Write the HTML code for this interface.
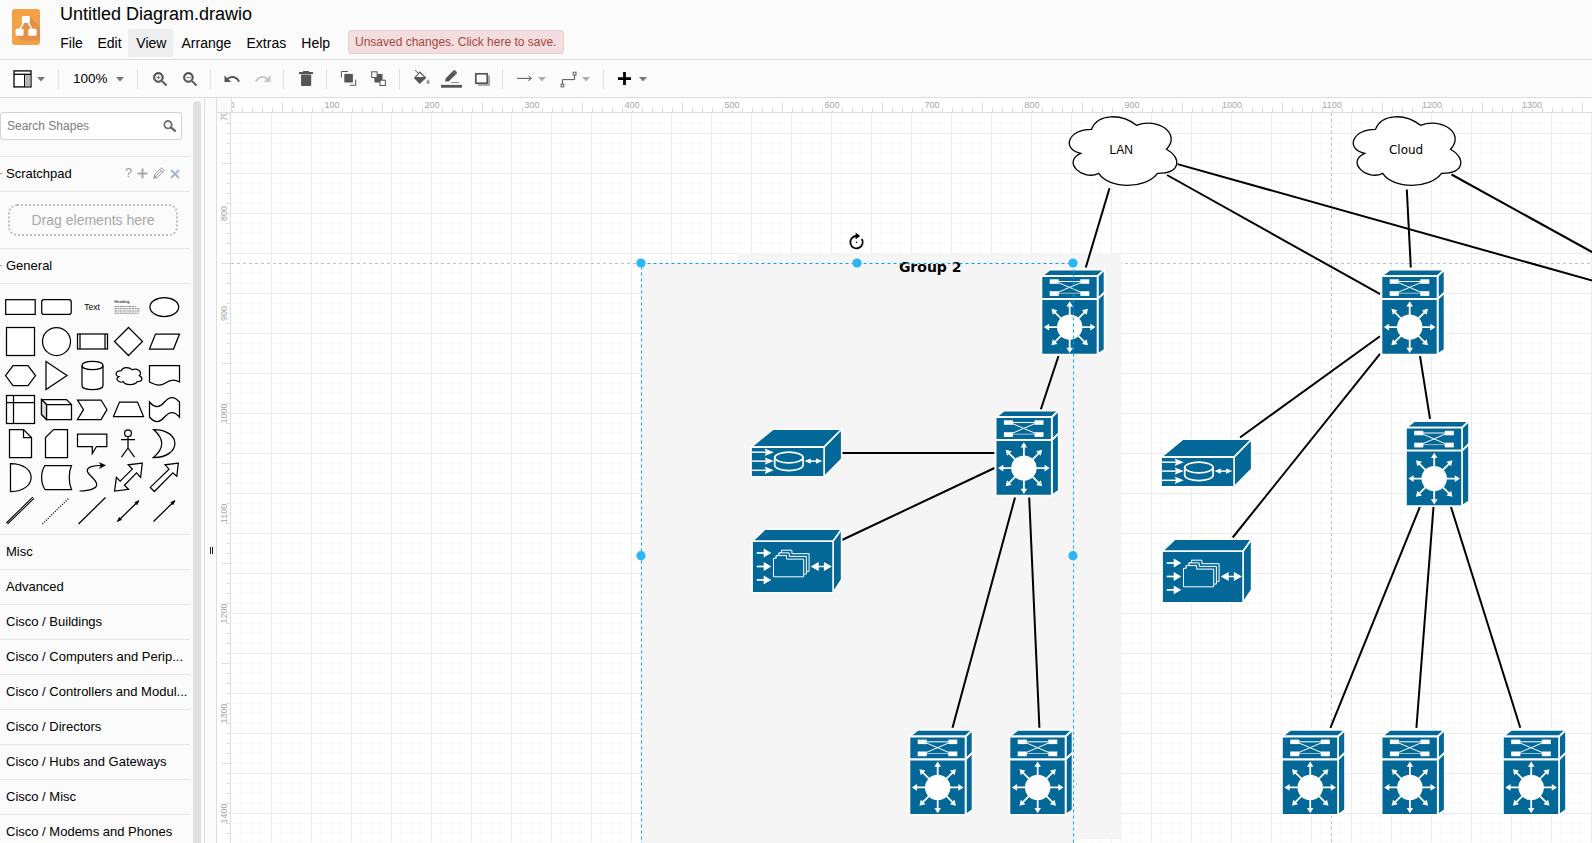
<!DOCTYPE html><html><head><meta charset="utf-8"><title>Untitled Diagram.drawio</title><style>
*{box-sizing:border-box}
html,body{margin:0;padding:0}
body{width:1592px;height:843px;overflow:hidden;background:#fbfbfb;font-family:"Liberation Sans",Helvetica,Arial,sans-serif;color:#000;position:relative}
.abs{position:absolute}
#menubar{position:absolute;left:0;top:0;width:1592px;height:60px;background:#fbfbfb;border-bottom:1px solid #dadce0}
#logo{position:absolute;left:12px;top:9px;width:28px;height:36px}
#title{position:absolute;left:60px;top:3px;font-size:18px;line-height:22px;white-space:nowrap;color:#000}
.mi{position:absolute;top:29px;height:28px;line-height:28px;font-size:14px;color:#000;white-space:nowrap;border-radius:2px}
#status{position:absolute;left:348px;top:30px;height:24px;width:216px;background:#f2dede;border:1px solid #ebccd1;border-radius:3px;color:#a94442;font-size:12px;line-height:22px;padding-left:6px;white-space:nowrap}
#toolbar{position:absolute;left:0;top:60px;width:1592px;height:38px;background:#fbfbfb;border-bottom:1px solid #dadce0}
.sep{position:absolute;top:9px;width:1px;height:20px;background:#e0e0e0}
#zoomtxt{position:absolute;left:73px;top:10px;font-size:13.5px;line-height:18px;color:#000}
#sidebar{position:absolute;left:0;top:98px;width:205px;height:745px;background:#fbfbfb;border-right:1px solid #e0e0e0;overflow:hidden}
#search{position:absolute;left:0;top:14px;width:182px;height:28px;border:1px solid #d2d2d2;border-radius:3px;background:#fff;font-size:12px;line-height:27px;color:#7d7d7d;padding-left:6px}
.hr{position:absolute;left:0;width:190px;height:1px;background:#e5e5e5}
.st{position:absolute;left:6px;margin-top:0.7px;font-size:13px;line-height:16px;color:#000;white-space:nowrap}
#drag{position:absolute;left:8px;top:106px;width:170px;height:32px;border:2px dotted #bdbdbd;border-radius:9px;font-size:14px;line-height:28px;text-align:center;color:#a8a8a8}
#sbthumb{position:absolute;left:193px;top:3px;width:8px;height:760px;border-radius:4px;background:#e0e0e0}
#hsplit{position:absolute;left:205px;top:98px;width:11px;height:745px;background:#fbfbfb}
</style></head><body><div id="menubar"><svg id="logo" viewBox="0 0 28 36"><rect x="0" y="0" width="28" height="36" rx="3" fill="#f2a244"/>
<path d="M17.800 7.400 L28 17.800 V31.600 H9.800 L3.800 26 L8 20 L11.600 14 Z" fill="#e4904a"/>
<path d="M11.500 14 L7.600 20.600 M16.300 14 L20.300 20.600" stroke="#fff" stroke-width="1.500" fill="none"/>
<rect x="9.800" y="7.100" width="8.100" height="6.900" rx="1.200" fill="#fff"/>
<rect x="3.600" y="19.800" width="8" height="7" rx="1.200" fill="#fff"/>
<rect x="16.300" y="19.800" width="8.200" height="7" rx="1.200" fill="#fff"/>
</svg><div id="title">Untitled Diagram.drawio</div><div class="mi" style="left:60.3px">File</div><div class="mi" style="left:97.5px">Edit</div><div class="mi" style="left:128px;width:45px;background:#eeeeee;padding-left:8.3px">View</div><div class="mi" style="left:181.5px">Arrange</div><div class="mi" style="left:246.5px">Extras</div><div class="mi" style="left:301.3px">Help</div><div id="status">Unsaved changes. Click here to save.</div></div><div id="toolbar"><svg class="abs" style="left:13px;top:10px" width="19" height="18" viewBox="0 0 19 18"><rect x="1" y="0.9" width="17" height="16" fill="#fff" stroke="#000" stroke-width="1.3"/><path d="M1 4.3H18" stroke="#000" stroke-width="1.3"/><path d="M11.6 4.3V17" stroke="#000" stroke-width="1.1"/><rect x="12.2" y="5" width="5.2" height="11.3" fill="#b4b4b4"/></svg><svg class="abs" style="left:37px;top:17px" width="8" height="5" viewBox="0 0 8 5"><path d="M0 0H8L4 4.6Z" fill="#777"/></svg><div class="sep" style="left:58px"></div><div class="sep" style="left:137px"></div><div class="sep" style="left:210px"></div><div class="sep" style="left:283px"></div><div class="sep" style="left:326px"></div><div class="sep" style="left:399px"></div><div class="sep" style="left:502px"></div><div class="sep" style="left:603px"></div><div id="zoomtxt">100%</div><svg class="abs" style="left:116px;top:17px" width="8" height="5" viewBox="0 0 8 5"><path d="M0 0H8L4 4.6Z" fill="#777"/></svg><svg class="abs" style="left:150.600px;top:9.800px" width="18.700" height="18.700" viewBox="0 0 24 24"><path d="M15.5 14h-.79l-.28-.27C15.41 12.59 16 11.11 16 9.5 16 5.91 13.09 3 9.5 3S3 5.910 3 9.500 5.910 16 9.500 16c1.610 0 3.090-.590 4.230-1.570l.270.280v.790l5 4.990L20.490 19l-4.990-5zm-6 0C7.010 14 5 11.990 5 9.500S7.010 5 9.500 5 14 7.010 14 9.500 11.990 14 9.500 14z" fill="#555" stroke="#555" stroke-width="0.700"/><path d="M12 10h-2v2H9v-2H7V9h2V7h1v2h2v1z" fill="#555"/></svg><svg class="abs" style="left:180.700px;top:9.800px" width="18.700" height="18.700" viewBox="0 0 24 24"><path d="M15.5 14h-.79l-.28-.27C15.41 12.59 16 11.11 16 9.5 16 5.91 13.09 3 9.5 3S3 5.910 3 9.500 5.910 16 9.500 16c1.610 0 3.090-.590 4.230-1.570l.270.280v.790l5 4.990L20.490 19l-4.990-5zm-6 0C7.010 14 5 11.990 5 9.500S7.010 5 9.500 5 14 7.010 14 9.500 11.990 14 9.500 14z" fill="#555" stroke="#555" stroke-width="0.700"/><path d="M7 9h5v1H7z" fill="#555"/></svg><svg class="abs" style="left:223.200px;top:9.900px" width="18" height="18" viewBox="0 0 24 24"><path d="M12.500 8c-2.650 0-5.050.990-6.900 2.600L2 7v9h9l-3.620-3.620c1.390-1.160 3.160-1.880 5.120-1.880 3.540 0 6.550 2.310 7.600 5.500l2.370-.780C21.080 11.030 17.150 8 12.500 8z" fill="#555"/></svg><svg class="abs" style="left:253.600px;top:9.900px" width="18" height="18" viewBox="0 0 24 24"><path d="M18.400 10.600C16.550 8.990 14.150 8 11.500 8c-4.650 0-8.580 3.030-9.960 7.220L3.900 16c1.050-3.190 4.050-5.500 7.600-5.500 1.950 0 3.730.720 5.120 1.880L13 16h9V7l-3.600 3.600z" fill="#c6c6c6"/></svg><svg class="abs" style="left:299px;top:10px" width="14" height="17" viewBox="0 0 14 17"><path d="M0 2.100H14V3.900H0ZM4 1H10V2.100H4Z" fill="#555"/><path d="M2.100 4.600H12.200V15Q12.200 15.900 11.300 15.900H3Q2.100 15.900 2.100 15Z" fill="#555"/></svg><svg class="abs" style="left:340px;top:10px" width="17" height="17" viewBox="0 0 17 17"><path d="M1.400 7.500V1.500H7.900M9.700 15.300H15.700V9.700" fill="none" stroke="#555" stroke-width="1"/><rect x="4.300" y="3.900" width="8.600" height="8.600" fill="#555"/></svg><svg class="abs" style="left:370px;top:10px" width="17" height="17" viewBox="0 0 17 17"><rect x="4.400" y="3.900" width="8.100" height="8.600" fill="#555"/><rect x="1.700" y="1.800" width="5.400" height="5.700" fill="#fbfbfb" stroke="#555" stroke-width="1"/><rect x="10" y="10.200" width="5.400" height="5.300" fill="#fbfbfb" stroke="#555" stroke-width="1"/></svg><svg class="abs" style="left:413px;top:9px" width="18" height="17" viewBox="0 0 18 17"><path d="M2 1.100L6.200 5.300" stroke="#555" stroke-width="1"/><path d="M6.700 2.300L13.400 8.700L6.700 15.100L0.900 9.100Z" fill="#555"/><path d="M6.700 4.100L10.900 8.100H3Z" fill="#fbfbfb"/><path d="M15.100 10.300C16.200 11.900 16.800 12.600 16.800 13.300A1.700 1.700 0 0 1 13.400 13.300C13.400 12.600 14 11.900 15.100 10.300Z" fill="#999"/></svg><svg class="abs" style="left:441px;top:9px" width="22" height="20" viewBox="0 0 22 20"><path d="M4.200 12.400L4.600 9.400L12.400 1.400Q13.200 0.700 14.200 1.500L15.600 2.900Q16.400 3.900 15.600 4.700L7.600 12.600Z" fill="#555"/><path d="M12.600 2.600L14.600 4.600" stroke="#999" stroke-width="0.700"/><path d="M10 13.500H18" stroke="#888" stroke-width="0.900"/><rect x="0" y="15.900" width="20.900" height="2.800" fill="#555"/></svg><svg class="abs" style="left:474px;top:12px" width="17" height="14" viewBox="0 0 17 14"><rect x="3.600" y="3.400" width="12.400" height="10.500" fill="#aaa"/><rect x="1.800" y="1.800" width="11.400" height="9.400" fill="#fbfbfb" stroke="#555" stroke-width="1.700"/></svg><svg class="abs" style="left:516px;top:13px" width="17" height="11" viewBox="0 0 17 11"><path d="M1 5.400H15.200M12.400 3L15.400 5.400L12.400 7.800" fill="none" stroke="#555" stroke-width="1"/></svg><svg class="abs" style="left:538px;top:17px" width="8" height="5" viewBox="0 0 8 5"><path d="M0 0H8L4 4.6Z" fill="#b0b0b0"/></svg><svg class="abs" style="left:560px;top:11px" width="17" height="17" viewBox="0 0 17 17"><path d="M2.400 13.200V8.600H14.600V4" fill="none" stroke="#555" stroke-width="1"/><rect x="1.100" y="13.200" width="2.700" height="2.700" fill="#fbfbfb" stroke="#555" stroke-width="0.900"/><rect x="13.200" y="1.200" width="2.800" height="2.800" fill="#fbfbfb" stroke="#555" stroke-width="0.900"/></svg><svg class="abs" style="left:582px;top:17px" width="8" height="5" viewBox="0 0 8 5"><path d="M0 0H8L4 4.6Z" fill="#b0b0b0"/></svg><svg class="abs" style="left:618px;top:12px" width="13" height="13" viewBox="0 0 13 13"><path d="M0 6.6H13M6.5 0V13" stroke="#000" stroke-width="2.8"/></svg><svg class="abs" style="left:639px;top:17px" width="8" height="5" viewBox="0 0 8 5"><path d="M0 0H8L4 4.6Z" fill="#777"/></svg></div><div id="sidebar"><div id="search">Search Shapes</div><svg class="abs" style="left:163px;top:22px" width="14" height="12" viewBox="0 0 14 12"><circle cx="5" cy="4.700" r="3.700" fill="none" stroke="#707070" stroke-width="1.800"/><path d="M7.900 7.500L12 10.800" stroke="#707070" stroke-width="2.400" stroke-linecap="round"/></svg><div class="hr" style="top:58px"></div><div class="hr" style="top:93px"></div><div class="hr" style="top:150px"></div><div class="hr" style="top:185px"></div><div class="hr" style="top:436px"></div><div class="hr" style="top:471px"></div><div class="hr" style="top:506px"></div><div class="hr" style="top:541px"></div><div class="hr" style="top:576px"></div><div class="hr" style="top:611px"></div><div class="hr" style="top:646px"></div><div class="hr" style="top:681px"></div><div class="hr" style="top:716px"></div><div class="st" style="top:67px">Scratchpad</div><div class="abs" style="left:0;top:75px;width:2px;height:1px;background:#999"></div><div class="abs" style="left:0;top:167px;width:2px;height:1px;background:#999"></div><div class="abs" style="left:125.100px;top:67.200px;font-size:13px;line-height:16px;color:#999">?</div><svg class="abs" style="left:136.500px;top:69.700px" width="11" height="11" viewBox="0 0 11 11"><path d="M0.500 5.500H10.500M5.500 0.500V10.500" stroke="#a6a6a6" stroke-width="1.900"/></svg><svg class="abs" style="left:153px;top:69px" width="12" height="12" viewBox="0 0 12 12"><path d="M0.800 11.200L1.600 7.600L7.800 1.400Q8.600 0.600 9.400 1.400L10.600 2.600Q11.400 3.400 10.600 4.200L4.400 10.400Z" fill="none" stroke="#999" stroke-width="1"/><path d="M3 9L8.800 3.200M6.800 2.400L9.600 5.200" stroke="#999" stroke-width="0.800"/><path d="M0.800 11.200L1.600 7.800L4.200 10.400Z" fill="#999"/></svg><svg class="abs" style="left:169.700px;top:70.500px" width="10" height="10" viewBox="0 0 10 10"><path d="M1 1L9 9M9 1L1 9" stroke="#a6b9d1" stroke-width="2.100"/></svg><div id="drag">Drag elements here</div><div class="st" style="top:159px">General</div><svg class="abs" style="left:0;top:192px" width="190" height="240" viewBox="0 290 190 240"><g fill="#fff" stroke="#000" stroke-width="1.250" stroke-linejoin="miter"><rect x="5.700" y="299.700" width="29.500" height="14.700"/><rect x="41.700" y="299.700" width="29.500" height="14.700" rx="2.200"/><ellipse cx="164.300" cy="307.100" rx="14.400" ry="9.500"/><rect x="6.5" y="327.5" width="28" height="28"/><circle cx="56.5" cy="341.5" r="14"/><rect x="77.5" y="334" width="30" height="15"/><path d="M80 334V349M105 334V349" fill="none"/><path d="M128.5 327.5L142.5 341.5L128.5 355.5L114.5 341.5Z"/><path d="M149.5 349L155.5 334H179.5L173.5 349Z"/><path d="M5.5 375.5L13 365.5H28L35.5 375.5L28 385.5H13Z"/><path d="M46 361.5L67 375.5L46 389.5Z"/><path d="M82 365.5C82 360 103 360 103 365.5V385.5C103 391 82 391 82 385.5Z"/><path d="M82 365.5C82 371 103 371 103 365.5" fill="none"/><path d="M121.4 370.65 C115.64 370.65 114.2 375.6 118.808 376.59 C114.2 378.768 119.384 383.52 123.128 381.54 C125.72 385.5 134.36 385.5 137.24 381.54 C143 381.54 143 377.58 139.4 375.6 C143 371.64 137.24 367.68 132.2 369.66 C128.6 366.69 122.84 366.69 121.4 370.65 Z"/><path d="M149.5 365.5H179.5V382C172 377.5 167 382 164.5 383.5C160 386.5 154 384.5 149.5 382Z"/><rect x="6.5" y="395.5" width="28" height="28"/><path d="M13.5 395.5V423.5M6.5 402.5H34.5" fill="none"/><path d="M41.5 399.5H66.5L71.5 404.5V419.5H46.5L41.5 414.5Z"/><path d="M41.5 399.5L46.5 404.5H71.5M46.5 404.5V419.5" fill="none"/><path d="M41.5 399.5L46.5 404.5V419.5L41.5 414.5Z" fill="#ddd"/><path d="M77.5 400H101L107 409.7L101 419.5H77.5L83.5 409.7Z"/><path d="M113.5 416.5L119.5 402H137.5L143.5 416.5Z"/><path d="M149.500 402Q157 411 164.500 402Q172 393 179.500 402V417Q172 408 164.500 417Q157 426 149.500 417Z"/><path d="M9.5 429.5H23.5L31.5 437.5V457.5H9.5Z"/><path d="M23.5 429.5V437.5H31.5" fill="none"/><path d="M53.5 429.5H67.500V457.5H45.500V437.5Z"/><path d="M77.500 434H106.800V446.500H96.500L92.300 453.500V446.500H77.500Z"/><circle cx="128" cy="433.2" r="3.4"/><path d="M128 436.600V448M121 439.500H135M128 448L121.500 457.200M128 448L134.500 457.200" fill="none"/><path d="M153.500 429.500C182 429.500 182 457.500 153.500 457.500C164.500 448 164.500 439 153.500 429.500Z"/><path d="M10.500 463.500C38 463.500 38 491.500 10.500 491.500Z"/><path d="M45 465.500H71.500C68.500 472 68.500 483 71.500 489.500H45C40.500 483 40.500 472 45 465.500Z"/><path d="M79.500 491C90 490.500 97 488.500 96.700 484.500C96.500 479 87 474.500 87.200 470.500C87.500 466 95 465.500 102 465.400" fill="none"/><path d="M105.400 465.300L99.500 462.700L101.200 465.500L99.500 468.400Z" fill="#000" stroke-width="0.600"/><path d="M142.300 463.200L128.200 464.800L132.300 469.100L120.200 481.200L116.400 477.400L114.600 491L128.500 489.400L124.400 485.300L136.500 472.900L140.600 477.400Z"/><path d="M178.300 463.200L165.100 464.800L169 469.100L150.300 487.400L154.400 491.500L172.800 472.900L176.800 476.300Z"/><path d="M6.300 523L32.700 497.200M7.500 524.200L33.900 498.400" fill="none" stroke-width="1.050"/><path d="M42.500 524L69 498" fill="none" stroke-dasharray="1 1.500"/><path d="M78.500 524L105.500 497.500" fill="none"/><path d="M119.500 519.500L136.500 503" fill="none"/><path d="M117.300 521.600L119.300 517.400L120 518.900L121.500 519.600ZM139 500.500L137 504.700L136.300 503.200L134.800 502.500Z" fill="#000" stroke-width="0.800"/><path d="M153.500 521.500L172.500 503" fill="none"/><path d="M175 500.500L173 504.700L172.300 503.200L170.800 502.500Z" fill="#000" stroke-width="0.800"/></g><text x="92" y="310" font-size="8.500" text-anchor="middle" font-family="Liberation Sans, sans-serif" fill="#000">Text</text><text x="114.300" y="303.300" font-size="3.900" font-weight="bold" font-family="Liberation Sans, sans-serif" fill="#444">Heading</text><path d="M114.500 306.5 h21" stroke="#7a7a8a" stroke-width="0.900" stroke-dasharray="2.500 0.600 1.500 0.500 3 0.600"/><path d="M114.500 308.7 h25" stroke="#7a7a8a" stroke-width="0.900" stroke-dasharray="2.500 0.600 1.500 0.500 3 0.600"/><path d="M114.500 311 h25" stroke="#7a7a8a" stroke-width="0.900" stroke-dasharray="2.500 0.600 1.500 0.500 3 0.600"/><path d="M114.500 313.2 h24" stroke="#7a7a8a" stroke-width="0.900" stroke-dasharray="2.500 0.600 1.500 0.500 3 0.600"/></svg><div class="st" style="top:445px">Misc</div><div class="st" style="top:480px">Advanced</div><div class="st" style="top:515px">Cisco / Buildings</div><div class="st" style="top:550px">Cisco / Computers and Perip...</div><div class="st" style="top:585px">Cisco / Controllers and Modul...</div><div class="st" style="top:620px">Cisco / Directors</div><div class="st" style="top:655px">Cisco / Hubs and Gateways</div><div class="st" style="top:690px">Cisco / Misc</div><div class="st" style="top:725px">Cisco / Modems and Phones</div><div id="sbthumb"></div></div><div id="hsplit"><div class="abs" style="left:5px;top:449px;width:1px;height:7px;background:#222"></div><div class="abs" style="left:7px;top:449px;width:1px;height:7px;background:#222"></div></div><svg class="abs" style="left:216px;top:98px" width="1376" height="745" viewBox="216 98 1376 745" font-family="Liberation Sans, sans-serif"><defs><pattern id="grid" x="231" y="93" width="40" height="40" patternUnits="userSpaceOnUse"><path d="M10 0V40M20 0V40M30 0V40M0 10H40M0 20H40M0 30H40" stroke="#f8f8f8" stroke-width="1" fill="none"/><path d="M0.5 0V40M0 0.5H40" stroke="#ececec" stroke-width="1" fill="none"/></pattern><path id="swa" d="M11 -0.900H20.600V-3.300L25.800 0L20.600 3.300V0.900H11Z" fill="#fff"/><symbol id="sw" viewBox="0 0 64 86" overflow="visible"><g fill="#036897" stroke="#fff" stroke-width="1.800" stroke-linejoin="round"><path d="M0.400 7.200L8.800 0.500H63.600L56.600 7.200Z"/><path d="M56.600 7.200L63.600 0.500V23.300L56.600 30.200Z"/><path d="M56.600 30.200L63.600 23.300V80.800L56.600 85.600Z"/><rect x="0.400" y="7.200" width="56.200" height="23"/><rect x="0.400" y="30.200" width="56.200" height="55.400"/></g><g fill="#fff"><rect x="8.700" y="10.300" width="9.100" height="4.500"/><rect x="39.300" y="10.300" width="9" height="4.500"/><rect x="8.700" y="22.200" width="9.100" height="4.700"/><rect x="39.300" y="22.200" width="9" height="4.700"/></g><path d="M17.500 13.700L39.600 23.100M17.500 23.100L39.600 13.700M17.500 12.500H39.600" stroke="#fff" stroke-width="1" fill="none"/><path d="M17.500 24.200H39.600" stroke="#fff" stroke-width="0.700" opacity="0.850" fill="none"/><circle cx="28.700" cy="58.100" r="12.700" fill="#fff"/><use href="#swa" transform="translate(28.700 58.100) rotate(0)"/><use href="#swa" transform="translate(28.700 58.100) rotate(45)"/><use href="#swa" transform="translate(28.700 58.100) rotate(90)"/><use href="#swa" transform="translate(28.700 58.100) rotate(135)"/><use href="#swa" transform="translate(28.700 58.100) rotate(180)"/><use href="#swa" transform="translate(28.700 58.100) rotate(225)"/><use href="#swa" transform="translate(28.700 58.100) rotate(270)"/><use href="#swa" transform="translate(28.700 58.100) rotate(315)"/></symbol><symbol id="ce" viewBox="0 0 92 49" overflow="visible"><g fill="#036897" stroke="#fff" stroke-width="1.6" stroke-linejoin="round"><path d="M0.800 18.800L22.400 1H91.400L73.800 18.800Z"/><path d="M73.800 18.800L91.400 1V30.800L73.800 48.400Z"/><rect x="0.800" y="18.800" width="73" height="29.600"/></g><path d="M1.800 23.9 H17" stroke="#fff" stroke-width="1.500"/><path d="M23.500 23.9 L14.300 20.2 L16 23.9 L14.300 27.6 Z" fill="#fff"/><path d="M1.800 32.8 H17" stroke="#fff" stroke-width="1.500"/><path d="M23.500 32.8 L14.300 29.1 L16 32.8 L14.300 36.5 Z" fill="#fff"/><path d="M1.800 42 H17" stroke="#fff" stroke-width="1.500"/><path d="M23.500 42 L14.300 38.3 L16 42 L14.300 45.7 Z" fill="#fff"/><path d="M24.400 29.200V37A14.200 5.300 0 0 0 52.800 37V29.200" fill="none" stroke="#fff" stroke-width="1.700"/><ellipse cx="38.600" cy="29.200" rx="14.200" ry="5.300" fill="none" stroke="#fff" stroke-width="1.700"/><path d="M58 32.800H68" stroke="#fff" stroke-width="1.500"/><path d="M54.200 32.800L60.400 30.100V35.500ZM72 32.800L65.800 30.100V35.500Z" fill="#fff"/></symbol><symbol id="fe" viewBox="0 0 91 65" overflow="visible"><g fill="#036897" stroke="#fff" stroke-width="1.600" stroke-linejoin="round"><path d="M0.800 12.800L13.600 0.700H90.300L81.800 12.800Z"/><path d="M81.800 12.800L90.300 0.700V51.200L81.800 64.200Z"/><rect x="0.800" y="12.800" width="81" height="51.400"/></g><path d="M5.400 24.5 H14" stroke="#fff" stroke-width="1.700"/><path d="M20 24.5 L12.400 20.1 V28.9 Z" fill="#fff"/><path d="M5.400 38 H14" stroke="#fff" stroke-width="1.700"/><path d="M20 38 L12.400 33.6 V42.4 Z" fill="#fff"/><path d="M5.400 51.4 H14" stroke="#fff" stroke-width="1.700"/><path d="M20 51.4 L12.400 47 V55.8 Z" fill="#fff"/><path transform="translate(27.6 21.4)" d="M0 3H2.700V0.300H13V3.800H30.200V21.500H0Z" fill="#036897" stroke="#fff" stroke-width="1"/><path transform="translate(24.9 24.1)" d="M0 3H2.700V0.300H13V3.800H30.200V21.500H0Z" fill="#036897" stroke="#fff" stroke-width="1"/><path transform="translate(22.2 26.8)" d="M0 3H2.700V0.300H13V3.800H30.200V21.500H0Z" fill="#036897" stroke="#fff" stroke-width="1"/><path d="M64 38H76" stroke="#fff" stroke-width="1.500"/><path d="M59.400 38L67.400 33.600V42.400ZM80.600 38L72.600 33.600V42.400Z" fill="#fff"/></symbol></defs><rect x="231" y="113" width="1361" height="730" fill="#fff"/><rect x="232" y="113" width="1360" height="730" fill="url(#grid)"/><path d="M231 263.500H1592M1331.500 113V843" stroke="#c2c2c2" stroke-width="1" stroke-dasharray="3 3" fill="none"/><rect x="738" y="253" width="383.500" height="586" fill="#f5f5f5"/><rect x="641" y="263" width="432.500" height="600" fill="#f5f5f5"/><g stroke="#000" stroke-width="2" fill="none"><path d="M1109.5 188.2 L1085.8 267.5"/><path d="M1058.5 356 L1040.8 409.5"/><path d="M842 453 L994.5 453"/><path d="M842 540 L994.5 468"/><path d="M1015 497.5 L952.5 727.8"/><path d="M1029.2 497.5 L1039.4 727.8"/><path d="M1167 175 L1380.2 294.2"/><path d="M1177.5 164.1 L1600 282.7"/><path d="M1406.8 189.5 L1410.8 267.5"/><path d="M1451.5 174.5 L1600 256.4"/><path d="M1380 336.2 L1240 437.5"/><path d="M1380 353.8 L1232.7 537.5"/><path d="M1420 356.2 L1430 418.8"/><path d="M1419.8 507 L1330.4 727.8"/><path d="M1433.5 507 L1416.4 727.8"/><path d="M1451 507 L1520.3 727.8"/></g><use href="#sw" x="1041" y="269" width="64" height="86"/><use href="#sw" x="995.2" y="410" width="64" height="86"/><use href="#sw" x="909" y="729.3" width="64" height="86"/><use href="#sw" x="1009" y="729.3" width="64" height="86"/><use href="#sw" x="1381" y="269" width="64" height="86"/><use href="#sw" x="1405.5" y="420.5" width="64" height="86"/><use href="#sw" x="1281.5" y="729.3" width="64" height="86"/><use href="#sw" x="1381.2" y="729.3" width="64" height="86"/><use href="#sw" x="1502.5" y="729.3" width="64" height="86"/><use href="#ce" x="750.300" y="428.300" width="92" height="49"/><use href="#fe" x="751.300" y="528.500" width="91" height="65"/><use href="#ce" x="1160.300" y="438.300" width="92" height="49"/><use href="#fe" x="1161.300" y="538.500" width="91" height="65"/><path d="M1091.5 129.3 C1067.5 129.3 1061.5 149.3 1080.7 153.3 C1061.5 162.1 1083.1 181.3 1098.7 173.3 C1109.5 189.3 1145.5 189.3 1157.5 173.3 C1181.5 173.3 1181.5 157.3 1166.5 149.3 C1181.5 133.3 1157.5 117.3 1136.5 125.3 C1121.5 113.3 1097.5 113.3 1091.5 129.3 Z" fill="#fff" stroke="#000" stroke-width="1.300"/><text x="1121.2" y="153.900" font-size="12" text-anchor="middle" font-family="Liberation Sans, sans-serif" fill="#000">LAN</text><path d="M1375.5 129.3 C1351.5 129.3 1345.5 149.3 1364.7 153.3 C1345.5 162.1 1367.1 181.3 1382.7 173.3 C1393.5 189.3 1429.5 189.3 1441.5 173.3 C1465.5 173.3 1465.5 157.3 1450.5 149.3 C1465.5 133.3 1441.5 117.3 1420.5 125.3 C1405.5 113.3 1381.5 113.3 1375.5 129.3 Z" fill="#fff" stroke="#000" stroke-width="1.300"/><text x="1406.1" y="153.900" font-size="12" text-anchor="middle" font-family="DejaVu Sans, Verdana, sans-serif" fill="#000">Cloud</text><text x="930.200" y="271.700" font-size="14" font-weight="bold" text-anchor="middle" font-family="DejaVu Sans, Verdana, sans-serif" fill="#000">Group 2</text><rect x="641.500" y="263.500" width="432" height="600" fill="none" stroke="#00a8ff" stroke-width="1" stroke-dasharray="3 3"/><circle cx="641" cy="263" r="4.600" fill="#29b6f2"/><circle cx="857" cy="263" r="4.600" fill="#29b6f2"/><circle cx="1073" cy="263" r="4.600" fill="#29b6f2"/><circle cx="641" cy="555.7" r="4.600" fill="#29b6f2"/><circle cx="1073" cy="555.7" r="4.600" fill="#29b6f2"/><g transform="translate(856.600 242.200)"><circle cx="0" cy="0.300" r="8.300" fill="#fff" opacity="0.700"/><path d="M5.200 -3.300A6.200 6.200 0 1 1 -0.500 -6.200" fill="none" stroke="#000" stroke-width="1.800"/><path d="M-1 -9.600L3.600 -6.200L-1 -3Z" fill="#000"/><circle cx="0" cy="0" r="0.700" fill="#000"/></g><rect x="216" y="98" width="1376" height="15" fill="#fff"/><rect x="216" y="98" width="15" height="745" fill="#fff"/><rect x="217" y="98" width="14" height="14.500" fill="#fbfbfb"/><clipPath id="hc"><rect x="231.500" y="98" width="1361" height="15"/></clipPath><clipPath id="vc"><rect x="216" y="113" width="15" height="730"/></clipPath><path d="M232.5 110V112.500M242.5 107.500V112.500M252.5 107.500V112.500M262.5 107.500V112.500M272.5 107.500V112.500M282.5 102.500V112.500M292.5 107.500V112.500M302.5 107.500V112.500M312.5 107.500V112.500M322.5 107.500V112.500M332.5 110V112.500M342.5 107.500V112.500M352.5 107.500V112.500M362.5 107.500V112.500M372.5 107.500V112.500M382.5 102.500V112.500M392.5 107.500V112.500M402.5 107.500V112.500M412.5 107.500V112.500M422.5 107.500V112.500M432.5 110V112.500M442.5 107.500V112.500M452.5 107.500V112.500M462.5 107.500V112.500M472.5 107.500V112.500M482.5 102.500V112.500M492.5 107.500V112.500M502.5 107.500V112.500M512.5 107.500V112.500M522.5 107.500V112.500M532.5 110V112.500M542.5 107.500V112.500M552.5 107.500V112.500M562.5 107.500V112.500M572.5 107.500V112.500M582.5 102.500V112.500M592.5 107.500V112.500M602.5 107.500V112.500M612.5 107.500V112.500M622.5 107.500V112.500M632.5 110V112.500M642.5 107.500V112.500M652.5 107.500V112.500M662.5 107.500V112.500M672.5 107.500V112.500M682.5 102.500V112.500M692.5 107.500V112.500M702.5 107.500V112.500M712.5 107.500V112.500M722.5 107.500V112.500M732.5 110V112.500M742.5 107.500V112.500M752.5 107.500V112.500M762.5 107.500V112.500M772.5 107.500V112.500M782.5 102.500V112.500M792.5 107.500V112.500M802.5 107.500V112.500M812.5 107.500V112.500M822.5 107.500V112.500M832.5 110V112.500M842.5 107.500V112.500M852.5 107.500V112.500M862.5 107.500V112.500M872.5 107.500V112.500M882.5 102.500V112.500M892.5 107.500V112.500M902.5 107.500V112.500M912.5 107.500V112.500M922.5 107.500V112.500M932.5 110V112.500M942.5 107.500V112.500M952.5 107.500V112.500M962.5 107.500V112.500M972.5 107.500V112.500M982.5 102.500V112.500M992.5 107.500V112.500M1002.5 107.500V112.500M1012.5 107.500V112.500M1022.5 107.500V112.500M1032.5 110V112.500M1042.5 107.500V112.500M1052.5 107.500V112.500M1062.5 107.500V112.500M1072.5 107.500V112.500M1082.5 102.500V112.500M1092.5 107.500V112.500M1102.5 107.500V112.500M1112.5 107.500V112.500M1122.5 107.500V112.500M1132.5 110V112.500M1142.5 107.500V112.500M1152.5 107.500V112.500M1162.5 107.500V112.500M1172.5 107.500V112.500M1182.5 102.500V112.500M1192.5 107.500V112.500M1202.5 107.500V112.500M1212.5 107.500V112.500M1222.5 107.500V112.500M1232.5 110V112.500M1242.5 107.500V112.500M1252.5 107.500V112.500M1262.5 107.500V112.500M1272.5 107.500V112.500M1282.5 102.500V112.500M1292.5 107.500V112.500M1302.5 107.500V112.500M1312.5 107.500V112.500M1322.5 107.500V112.500M1332.5 110V112.500M1342.5 107.500V112.500M1352.5 107.500V112.500M1362.5 107.500V112.500M1372.5 107.500V112.500M1382.5 102.500V112.500M1392.5 107.500V112.500M1402.5 107.500V112.500M1412.5 107.500V112.500M1422.5 107.500V112.500M1432.5 110V112.500M1442.5 107.500V112.500M1452.5 107.500V112.500M1462.5 107.500V112.500M1472.5 107.500V112.500M1482.5 102.500V112.500M1492.5 107.500V112.500M1502.5 107.500V112.500M1512.5 107.500V112.500M1522.5 107.500V112.500M1532.5 110V112.500M1542.5 107.500V112.500M1552.5 107.500V112.500M1562.5 107.500V112.500M1572.5 107.500V112.500M1582.5 102.500V112.500M1592.5 107.500V112.500M228.500 113.5H230.500M226 123.5H230.500M226 133.5H230.500M226 143.5H230.500M226 153.5H230.500M221.500 163.5H230.500M226 173.5H230.500M226 183.5H230.500M226 193.5H230.500M226 203.5H230.500M228.500 213.5H230.500M226 223.5H230.500M226 233.5H230.500M226 243.5H230.500M226 253.5H230.500M221.500 263.5H230.500M226 273.5H230.500M226 283.5H230.500M226 293.5H230.500M226 303.5H230.500M228.500 313.5H230.500M226 323.5H230.500M226 333.5H230.500M226 343.5H230.500M226 353.5H230.500M221.500 363.5H230.500M226 373.5H230.500M226 383.5H230.500M226 393.5H230.500M226 403.5H230.500M228.500 413.5H230.500M226 423.5H230.500M226 433.5H230.500M226 443.5H230.500M226 453.5H230.500M221.500 463.5H230.500M226 473.5H230.500M226 483.5H230.500M226 493.5H230.500M226 503.5H230.500M228.500 513.5H230.500M226 523.5H230.500M226 533.5H230.500M226 543.5H230.500M226 553.5H230.500M221.500 563.5H230.500M226 573.5H230.500M226 583.5H230.500M226 593.5H230.500M226 603.5H230.500M228.500 613.5H230.500M226 623.5H230.500M226 633.5H230.500M226 643.5H230.500M226 653.5H230.500M221.500 663.5H230.500M226 673.5H230.500M226 683.5H230.500M226 693.5H230.500M226 703.5H230.500M228.500 713.5H230.500M226 723.5H230.500M226 733.5H230.500M226 743.5H230.500M226 753.5H230.500M221.500 763.5H230.500M226 773.5H230.500M226 783.5H230.500M226 793.5H230.500M226 803.5H230.500M228.500 813.5H230.500M226 823.5H230.500M226 833.5H230.500M226 843.5H230.500" stroke="#dadce3" stroke-width="1" fill="none"/><g clip-path="url(#hc)"><text x="232" y="108.100" font-size="9" text-anchor="middle" fill="#a6a6a6">0</text><text x="332" y="108.100" font-size="9" text-anchor="middle" fill="#a6a6a6">100</text><text x="432" y="108.100" font-size="9" text-anchor="middle" fill="#a6a6a6">200</text><text x="532" y="108.100" font-size="9" text-anchor="middle" fill="#a6a6a6">300</text><text x="632" y="108.100" font-size="9" text-anchor="middle" fill="#a6a6a6">400</text><text x="732" y="108.100" font-size="9" text-anchor="middle" fill="#a6a6a6">500</text><text x="832" y="108.100" font-size="9" text-anchor="middle" fill="#a6a6a6">600</text><text x="932" y="108.100" font-size="9" text-anchor="middle" fill="#a6a6a6">700</text><text x="1032" y="108.100" font-size="9" text-anchor="middle" fill="#a6a6a6">800</text><text x="1132" y="108.100" font-size="9" text-anchor="middle" fill="#a6a6a6">900</text><text x="1232" y="108.100" font-size="9" text-anchor="middle" fill="#a6a6a6">1000</text><text x="1332" y="108.100" font-size="9" text-anchor="middle" fill="#a6a6a6">1100</text><text x="1432" y="108.100" font-size="9" text-anchor="middle" fill="#a6a6a6">1200</text><text x="1532" y="108.100" font-size="9" text-anchor="middle" fill="#a6a6a6">1300</text></g><g clip-path="url(#vc)"><text transform="translate(227 113.5) rotate(-90)" font-size="9" text-anchor="middle" fill="#a6a6a6">700</text><text transform="translate(227 213.5) rotate(-90)" font-size="9" text-anchor="middle" fill="#a6a6a6">800</text><text transform="translate(227 313.5) rotate(-90)" font-size="9" text-anchor="middle" fill="#a6a6a6">900</text><text transform="translate(227 413.5) rotate(-90)" font-size="9" text-anchor="middle" fill="#a6a6a6">1000</text><text transform="translate(227 513.5) rotate(-90)" font-size="9" text-anchor="middle" fill="#a6a6a6">1100</text><text transform="translate(227 613.5) rotate(-90)" font-size="9" text-anchor="middle" fill="#a6a6a6">1200</text><text transform="translate(227 713.5) rotate(-90)" font-size="9" text-anchor="middle" fill="#a6a6a6">1300</text><text transform="translate(227 813.5) rotate(-90)" font-size="9" text-anchor="middle" fill="#a6a6a6">1400</text></g><path d="M216.500 98V843M230.500 113V843M231.500 98V112.500M216 112.500H1592" stroke="#dcdee6" stroke-width="1" fill="none"/></svg></body></html>
